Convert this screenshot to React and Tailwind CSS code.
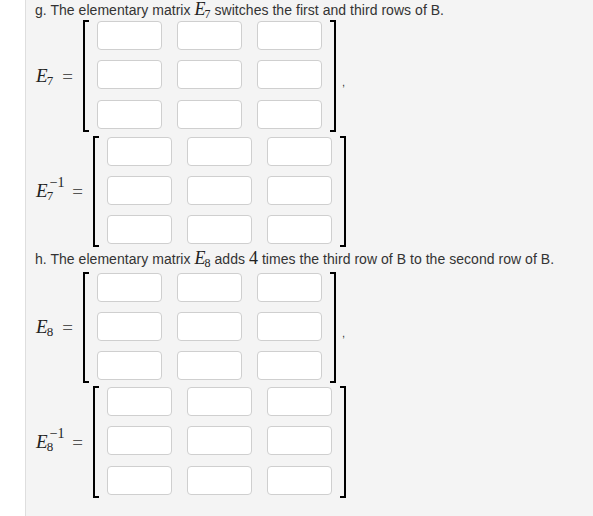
import React from "react";

const serif = { fontFamily: '"Liberation Serif", "Times New Roman", serif' };

function Cell() {
  return (
    <div className="h-[29px] w-[65px] rounded-[4px] border border-[#cfcfcf] bg-white" />
  );
}

function Matrix({ className = "" }) {
  return (
    <div className={"flex items-stretch " + className}>
      <div className="w-[6px] border-l-2 border-y-2 border-black" />
      <div className="grid grid-cols-3 gap-x-[15px] gap-y-[9px] px-[8px] pt-[1px] pb-[2px]">
        {Array.from({ length: 9 }).map((_, i) => (
          <Cell key={i} />
        ))}
      </div>
      <div className="w-[6px] border-r-2 border-y-2 border-black" />
    </div>
  );
}

function Label({ sub, inv }) {
  return (
    <div
      className={"flex items-center justify-between text-[#222] " + (inv ? "w-[48px]" : "w-[38px]")}
      style={serif}
    >
      <span className="flex items-start pl-[1px]">
        <span className="text-[19px] italic leading-none">E</span>
        {inv ? (
          <span className="-ml-[1px] flex flex-col items-start leading-none">
            <span className="-mt-[5px] ml-[3px] text-[14px] leading-none">−1</span>
            <span className="-mt-[1px] text-[13px] leading-none">{sub}</span>
          </span>
        ) : (
          <span className="-ml-[1px] mt-[8px] text-[13px] leading-none">{sub}</span>
        )}
      </span>
      <span className="text-[19px] leading-none text-[#555]">=</span>
    </div>
  );
}

function MathE({ sub }) {
  return (
    <span className="leading-none text-[#222]" style={serif}>
      <span className="text-[18px] italic leading-none">E</span>
      <span className="relative top-[3px] -ml-[1px] text-[12px] leading-none">{sub}</span>
    </span>
  );
}

export default function App() {
  return (
    <div
      className="flex min-h-[516px] bg-white text-[14px] text-[#333] tracking-[0.04px]"
      style={{ fontFamily: '"Liberation Sans", Arial, sans-serif' }}
    >
      <div className="w-[25px] shrink-0" />
      <div className="flex-1 border-l border-[#dedede] bg-[#f4f4f4] pl-[9px]">
        <p className="h-[20px] leading-[20px] whitespace-nowrap">
          g. The elementary matrix <MathE sub="7" /> switches the first and third rows of B.
        </p>

        <div className="flex items-center">
          <Label sub="7" />
          <Matrix className="ml-[10px] h-[112px]" />
          <span className="ml-[6px] mt-[12px] text-[11px] leading-none">,</span>
        </div>

        <div className="mt-[4px] flex items-center">
          <Label sub="7" inv />
          <Matrix className="ml-[10px] h-[111px]" />
        </div>

        <p className="mt-[2px] h-[20px] leading-[20px] whitespace-nowrap">
          h. The elementary matrix <MathE sub="8" /> adds{" "}
          <span className="text-[18px] leading-none text-[#222]" style={serif}>4</span> times the third row of B to the
          second row of B.
        </p>

        <div className="mt-[3px] flex items-center">
          <Label sub="8" />
          <Matrix className="ml-[10px] h-[111px]" />
          <span className="ml-[6px] mt-[12px] text-[11px] leading-none">,</span>
        </div>

        <div className="mt-[3px] flex items-center">
          <Label sub="8" inv />
          <Matrix className="ml-[10px] h-[112px]" />
        </div>
      </div>
    </div>
  );
}
